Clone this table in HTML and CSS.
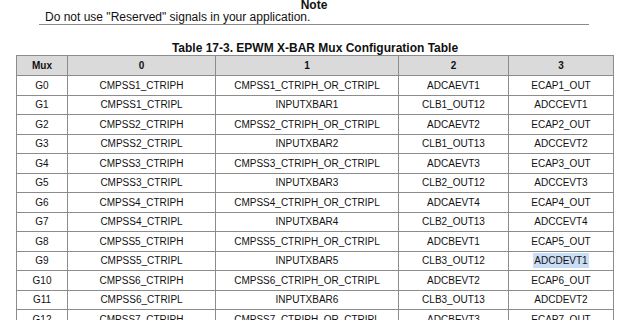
FILE: index.html
```html
<!DOCTYPE html>
<html>
<head>
<meta charset="utf-8">
<link rel="stylesheet" href="styles.css">
</head>
<body>
<div class="note">
  <div class="note-title">Note</div>
  <div class="note-text">Do not use "Reserved" signals in your application.</div>
</div>
<div class="caption">Table 17-3. EPWM X-BAR Mux Configuration Table</div>
<table class="mux">
  <colgroup>
    <col class="c-mux"><col class="c0"><col class="c1"><col class="c2"><col class="c3">
  </colgroup>
  <thead>
    <tr><th>Mux</th><th>0</th><th>1</th><th>2</th><th>3</th></tr>
  </thead>
  <tbody>
    <tr><td>G0</td><td>CMPSS1_CTRIPH</td><td>CMPSS1_CTRIPH_OR_CTRIPL</td><td>ADCAEVT1</td><td>ECAP1_OUT</td></tr>
    <tr><td>G1</td><td>CMPSS1_CTRIPL</td><td>INPUTXBAR1</td><td>CLB1_OUT12</td><td>ADCCEVT1</td></tr>
    <tr><td>G2</td><td>CMPSS2_CTRIPH</td><td>CMPSS2_CTRIPH_OR_CTRIPL</td><td>ADCAEVT2</td><td>ECAP2_OUT</td></tr>
    <tr><td>G3</td><td>CMPSS2_CTRIPL</td><td>INPUTXBAR2</td><td>CLB1_OUT13</td><td>ADCCEVT2</td></tr>
    <tr><td>G4</td><td>CMPSS3_CTRIPH</td><td>CMPSS3_CTRIPH_OR_CTRIPL</td><td>ADCAEVT3</td><td>ECAP3_OUT</td></tr>
    <tr><td>G5</td><td>CMPSS3_CTRIPL</td><td>INPUTXBAR3</td><td>CLB2_OUT12</td><td>ADCCEVT3</td></tr>
    <tr><td>G6</td><td>CMPSS4_CTRIPH</td><td>CMPSS4_CTRIPH_OR_CTRIPL</td><td>ADCAEVT4</td><td>ECAP4_OUT</td></tr>
    <tr><td>G7</td><td>CMPSS4_CTRIPL</td><td>INPUTXBAR4</td><td>CLB2_OUT13</td><td>ADCCEVT4</td></tr>
    <tr><td>G8</td><td>CMPSS5_CTRIPH</td><td>CMPSS5_CTRIPH_OR_CTRIPL</td><td>ADCBEVT1</td><td>ECAP5_OUT</td></tr>
    <tr><td>G9</td><td>CMPSS5_CTRIPL</td><td>INPUTXBAR5</td><td>CLB3_OUT12</td><td><span class="sel">ADCDEVT1</span></td></tr>
    <tr><td>G10</td><td>CMPSS6_CTRIPH</td><td>CMPSS6_CTRIPH_OR_CTRIPL</td><td>ADCBEVT2</td><td>ECAP6_OUT</td></tr>
    <tr><td>G11</td><td>CMPSS6_CTRIPL</td><td>INPUTXBAR6</td><td>CLB3_OUT13</td><td>ADCDEVT2</td></tr>
    <tr><td>G12</td><td>CMPSS7_CTRIPH</td><td>CMPSS7_CTRIPH_OR_CTRIPL</td><td>ADCBEVT3</td><td>ECAP7_OUT</td></tr>
  </tbody>
</table>
</body>
</html>
```
FILE: styles.css
```css
html, body {
  margin: 0;
  padding: 0;
  background: #ffffff;
  overflow: hidden;
}
body {
  width: 640px;
  height: 320px;
  font-family: "Liberation Sans", Arial, sans-serif;
  color: #111111;
}
.note {
  margin: 0 51px 0 39px;
  border-bottom: 1px solid #8a8a8a;
}
.note-title {
  font-weight: bold;
  font-size: 12px;
  line-height: 12px;
  text-align: center;
  margin-top: -1px;
}
.note-text {
  font-size: 12px;
  line-height: 13px;
  padding-left: 6px;
}
.caption {
  font-weight: bold;
  font-size: 12px;
  line-height: 14px;
  text-align: center;
  margin-top: 16px;
  width: 630px;
}
.mux {
  border-collapse: collapse;
  margin-left: 16px;
  width: 597px;
  table-layout: fixed;
  font-size: 10px;
}
.c-mux { width: 51px; }
.c0 { width: 148px; }
.c1 { width: 183px; }
.c2 { width: 110px; }
.c3 { width: 105px; }
.mux th, .mux td {
  border: 1px solid #8c8c8c;
  padding: 0;
  text-align: center;
  height: 18.5px;
  white-space: nowrap;
}
.mux th {
  background: #dadada;
  font-weight: bold;
  height: 19px;
}
.sel {
  background: #c9ddf5;
  padding: 2px 1px;
}
```
